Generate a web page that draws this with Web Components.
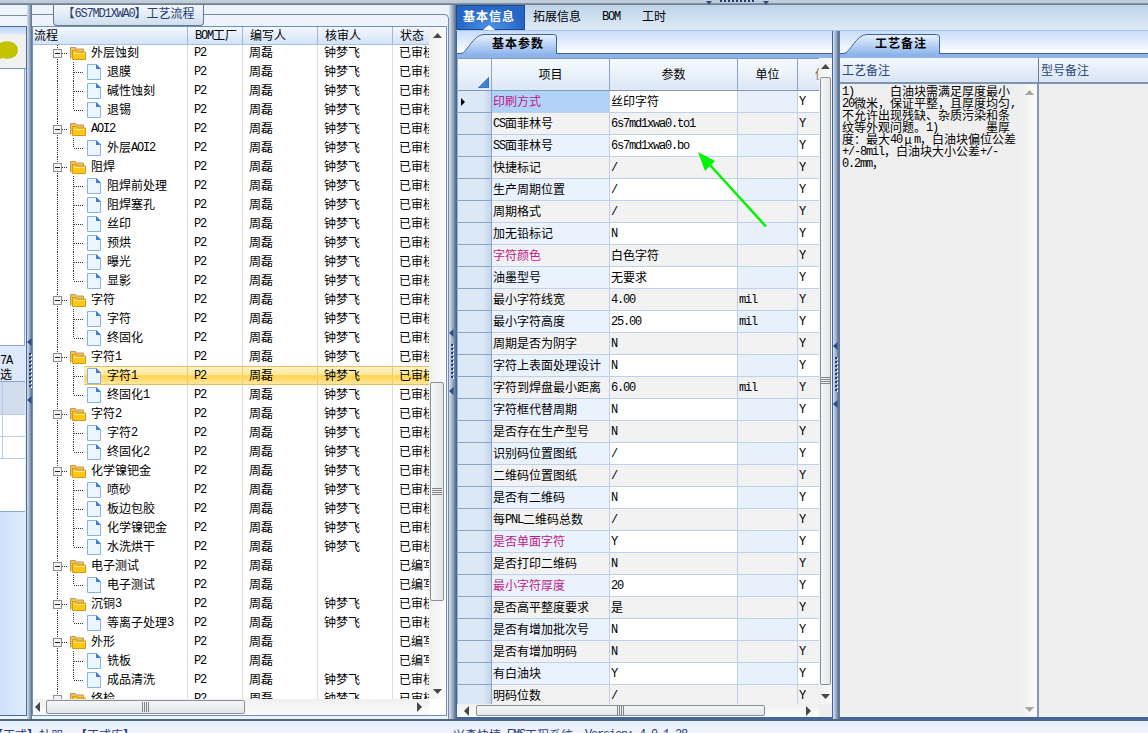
<!DOCTYPE html>
<html lang="zh-CN">
<head>
<meta charset="utf-8">
<title>工艺流程</title>
<style>
    html, body { margin: 0; height: 733px; overflow: hidden; }
    body {
        width: 1148px;
        font-family: "Noto Sans CJK SC", sans-serif;
        font-size: 12px;
        line-height: 18px;
        color: #000;
        background: #e9f1fb;
    }
</style>
</head>
<body>
<app-shell>
    <side-strip slot="main"></side-strip>
    <split-bar slot="main" style="width:5px;--grip:333px"></split-bar>
    <process-tree slot="main"></process-tree>
    <split-bar slot="main" style="width:7px;--grip:324px"></split-bar>
    <detail-area slot="main">
        <param-grid slot="left"></param-grid>
        <split-bar slot="mid" style="width:6px;--grip:311px"></split-bar>
        <notes-panel slot="right"></notes-panel>
    </detail-area>
</app-shell>
<script>
const base = `
    *, :host { box-sizing: border-box; }
    i.l { font: 12px/0 "Liberation Mono", monospace; letter-spacing: -1.2px; font-style: normal; white-space: pre; vertical-align: 1px; }
    b i.l { font-weight: bold; }
`;

// half-width characters take exactly 6px, like in a bitmap font
function mix(text) {
    return text.replace(/[\x20-\x7e]+/g, m => `<i class="l">${m}</i>`);
}

class AppShell extends HTMLElement {
    connectedCallback() {
        this.attachShadow({ mode: 'open' });
        this.shadowRoot.innerHTML = `
            <style>
                ${base}
                :host { display: flex; flex-direction: column; width: 1148px; height: 733px; overflow: hidden; }
                .top {
                    height: 5px; flex: none; display: flex; justify-content: center;
                    background: linear-gradient(#c3d0de, #bccad8 55%, #8493a4 70%, #5f7082 85%, #8fa0b2);
                }
                .top svg { display: block; margin-left: 326px; }
                .main { display: flex; height: 714px; flex: none; }
                .status {
                    height: 14px; flex: none; overflow: hidden; display: flex;
                    border-top: 2px solid #53657f;
                    background: linear-gradient(#e4eefb, #f0f5fc);
                    color: #2c4078;
                }
                .status span { white-space: pre; padding-top: 5px; }
                .status i.l { vertical-align: 2px; }
                .status .a { width: 453px; text-indent: -9px; flex: none; }
            </style>
            <div class="top">
                <svg width="64" height="5"><path d="M1 1h6l-3 4zM58 1h6l-3 4z" fill="#34507c"/><path d="M15 1h35" stroke="#243a78" stroke-width="2" stroke-dasharray="2 2"/></svg>
            </div>
            <div class="main"><slot name="main"></slot></div>
            <div class="status">
                <span class="a">${mix('【正式】杜朋  【正式库】')}</span>
                <span>${mix('兴森快捷 EMS工程系统  Version: 4.0.1.28')}</span>
            </div>
        `;
    }
}

class SplitBar extends HTMLElement {
    connectedCallback() {
        this.attachShadow({ mode: 'open' });
        this.shadowRoot.innerHTML = `
            <style>
                :host {
                    display: block; flex: none; padding-top: var(--grip); overflow: hidden;
                    background: linear-gradient(90deg, #d6e2f0, #a9bacd 40%, #7387a0 80%, #52698c);
                    box-sizing: border-box;
                }
                svg { display: block; }
            </style>
            <svg width="6" height="66"><path d="M4.500 16v36" stroke="#fff" stroke-dasharray="2 2"/><path d="M4.500 0v8L0 4zM4.500 58v8L0 62z" fill="#2f4a85"/><path d="M3 15v36" stroke="#243a78" stroke-width="2" stroke-dasharray="2 2"/></svg>
        `;
    }
}

class ScrollBar extends HTMLElement {
    connectedCallback() {
        const v = this.hasAttribute('vertical');
        const faded = this.hasAttribute('faded');
        const before = this.getAttribute('before') || 0;
        const size = this.getAttribute('size') || 0;
        const fill = faded ? '#a5a5a5' : '#474747';
        this.attachShadow({ mode: 'open' });
        this.shadowRoot.innerHTML = `
            <style>
                *, :host { box-sizing: border-box; }
                :host {
                    display: flex; flex: none; align-items: center;
                    flex-direction: ${v ? 'column' : 'row'};
                    background: linear-gradient(${v ? '90deg' : '180deg'}, #f0f0f0, #fbfbfb);
                }
                svg { flex: none; display: block; }
                .gap { flex: none; ${v ? 'height' : 'width'}: ${before}px; }
                .thumb {
                    flex: none; display: flex; align-items: center; justify-content: center;
                    ${v ? `width: calc(100% - 2px); height: ${size}px` : `height: calc(100% - 2px); width: ${size}px`};
                    border: 1px solid #8b8f96; border-radius: 2px;
                    background: linear-gradient(${v ? '90deg' : '180deg'}, #f5f6f7, #e3e6ea);
                }
                .rest { flex: 1; }
            </style>
            ${v ? `<svg width="9" height="16"><path d="M0 11h9L4.500 6z" fill="${fill}"/></svg>`
                : `<svg width="13" height="10"><path d="M7 0v10L2 5z" fill="${fill}"/></svg>`}
            <div class="gap"></div>
            ${size ? `<div class="thumb">${v
                ? '<svg width="10" height="8"><path d="M0 .5h10M0 2.500h10M0 4.500h10M0 6.500h10" stroke="#858585"/></svg>'
                : '<svg width="8" height="10"><path d="M.5 0v10M2.500 0v10M4.500 0v10M6.500 0v10" stroke="#858585"/></svg>'}</div>` : ''}
            <div class="rest"></div>
            ${v ? `<svg width="9" height="16"><path d="M0 6h9l-4.500 5z" fill="${fill}"/></svg>`
                : `<svg width="13" height="10"><path d="M4 0v10l5-5z" fill="${fill}"/></svg>`}
        `;
    }
}

class SideStrip extends HTMLElement {
    connectedCallback() {
        this.attachShadow({ mode: 'open' });
        this.shadowRoot.innerHTML = `
            <style>
                ${base}
                :host { display: flex; flex-direction: column; width: 27px; flex: none; background: #eef4fc; }
                .cap { height: 21px; flex: none; }
                .cap::after { content: ""; display: block; height: 10px; border-bottom: 1px solid #7b8ba0; }
                .box { width: 27px; height: 690px; border: solid #4a6aa5; border-width: 1px 1px 1px 0; background: linear-gradient(90deg, #cfe1fb, #e1edfd); }
                .bar { height: 7px; background: linear-gradient(#bfd5f6, #d9e8fd); }
                .tool { height: 35px; background: #f1f1f1; border-bottom: 1px solid #7b93bb; padding-top: 7px; }
                .tool svg { display: block; }
                .white { height: 277px; width: 25px; background: #fff; border-right: 1px solid #8ba6cf; border-bottom: 1px solid #8ba6cf; }
                .head { height: 36px; line-height: 14px; padding-top: 7px; background: #dde9fb; width: 25px; white-space: nowrap; border-bottom: 1px solid #8ba6cf; }
                .grid { width: 25px; height: 130px; background: #fff; display: grid; grid-template-columns: 2px 1fr; grid-template-rows: 33px 22px 22px 1fr; border-bottom: 1px solid #8ba6cf; }
                .grid span { border: solid #b6cbed; border-width: 0 0 1px 1px; }
                .grid span:nth-child(-n+2) { background: #d1dcec; }
                .grid span:nth-child(odd) { border-left: 0; }
                .grid span:nth-child(n+7) { border: 0; }
            </style>
            <div class="cap"></div>
            <div class="box">
                <div class="bar"></div>
                <div class="tool"><svg width="20" height="22"><path d="M0 2C7-2 18 1 18 9S8 19 2 17L0 18z" fill="#c3c300"/></svg></div>
                <div class="white"></div>
                <div class="head">${mix('7A')}<br>选</div>
                <div class="grid">${'<span></span>'.repeat(8)}</div>
            </div>
        `;
    }
}

// name, is folder
const steps = [
    ['外层蚀刻', 1], ['退膜'], ['碱性蚀刻'], ['退锡'],
    ['AOI2', 1], ['外层AOI2'],
    ['阻焊', 1], ['阻焊前处理'], ['阻焊塞孔'], ['丝印'], ['预烘'], ['曝光'], ['显影'],
    ['字符', 1], ['字符'], ['终固化'],
    ['字符1', 1], ['字符1'], ['终固化1'],
    ['字符2', 1], ['字符2'], ['终固化2'],
    ['化学镍钯金', 1], ['喷砂'], ['板边包胶'], ['化学镍钯金'], ['水洗烘干'],
    ['电子测试', 1], ['电子测试'],
    ['沉铜3', 1], ['等离子处理3'],
    ['外形', 1], ['铣板'], ['成品清洗'],
    ['终检', 1]
];
const selectedStep = 17;
const editedOnly = [27, 28, 31, 32];

function stepIcon(folder, last) {
    const dots = 'stroke="#333" stroke-dasharray="1 1" fill="none"';
    if (folder) {
        return `<svg width="58" height="19">
            <path d="M24.500 0v19M29 10.500h6" ${dots}/>
            <rect x="20.500" y="6.500" width="8" height="8" fill="#f4f4f4" stroke="#8d8d8d"/><path d="M22 10.500h5" stroke="#222"/>
            <path d="M37.500 15.500v-11h5l1 1.500h7v3" fill="#e6c06a" stroke="#c79a45"/>
            <path d="M39.500 16.500v-9h4l1 1.500h8v7.500z" fill="#ffc814" stroke="#d9971a"/>
            <path d="M40.500 10.500h11.500" stroke="#ffe994"/>
        </svg>`;
    }
    return `<svg width="74" height="19">
        <path d="M24.500 0v19M40.500 0v${last ? 10 : 19}M41 10.500h9" ${dots}/>
        <path d="M54.500 2.500h9l4 4v11h-13z" fill="#eaf5ff" stroke="#86b3e6"/>
        <path d="M63 2v5h5z" fill="#3f80d4"/>
    </svg>`;
}

class ProcessTree extends HTMLElement {
    connectedCallback() {
        this.attachShadow({ mode: 'open' });
        const rows = steps.map(([name, folder], i) => {
            const edited = editedOnly.includes(i);
            const last = !steps[i + 1] || steps[i + 1][1];
            return `<div class="row ${i === selectedStep ? 'sel' : ''}">
                <span class="name">${stepIcon(folder, last)}<div>${mix(name)}</div></span>
                <span>${mix('P2')}</span><span>周磊</span>
                <span>${edited ? '' : '钟梦飞'}</span>
                <span>${edited ? '已编写' : '已审核'}</span>
            </div>`;
        }).join('');
        this.shadowRoot.innerHTML = `
            <style>
                ${base}
                :host { display: flex; flex-direction: column; width: 417px; flex: none; background: #edf3fb; }
                .cap { height: 21px; flex: none; display: flex; }
                .line { height: 10px; border-bottom: 1px solid #7b8ba0; }
                .line.end { flex: 1; height: 12px; margin-top: 9px; border: solid #7b8ba0; border-width: 1px 1px 0 0; border-radius: 0 5px 0 0; }
                .title { width: 151px; height: 21px; border: 1px solid #66788e; border-top: 0; border-radius: 0 0 4px 4px; background: linear-gradient(#f4f8fd, #cfdeee); color: #29406e; text-align: center; line-height: 15px; white-space: nowrap; }
                .frame { flex: 1; border-right: 1px solid #7b8ba0; padding-right: 1px; padding-bottom: 3px; min-height: 0; }
                .grid { height: 690px; border: 1px solid #6f8fbe; background: #fff; display: flex; }
                .left { width: 396px; flex: none; display: flex; flex-direction: column; }
                .head, .row { display: grid; grid-template-columns: 155px 55px 75px 75px 36px; flex: none; }
                .head { height: 18px; background: linear-gradient(#f3f8ff, #d3e3f7); border-bottom: 1px solid #a9c0dc; line-height: 15px; }
                .head span { border-right: 1px solid #9fb6d4; padding-left: 7px; overflow: hidden; white-space: nowrap; }
                .head span:first-child { padding-left: 1px; }
                .head span:last-child { border: 0; }
                .body { height: 654px; overflow: hidden; }
                .row { height: 19px; line-height: 18px; }
                .row:first-child { margin-top: -2px; }
                .row span { border-right: 1px solid #dcdcdc; padding-left: 6px; overflow: hidden; white-space: nowrap; height: 19px; }
                .row span.name { padding: 0; display: flex; }
                .row span:last-child { border: 0; }
                .row.sel { background: linear-gradient(#e2c068 1px, #fff3c4 1px, #fde79b 45%, #ffd34c 52%, #ffe79a 94%, #e2c068 95%) 51px 0 no-repeat; }
                .row.sel span { border-color: #e8ce7c; }
                svg { flex: none; display: block; }
                .wrap { display: flex; flex-direction: column; }
                .top { display: flex; height: 672px; }
                .top scroll-bar { width: 16px; height: 672px; }
                .hbar { height: 16px; width: 412px; display: flex; }
                .hbar scroll-bar { width: 396px; height: 16px; padding-right: 3px; }
            </style>
            <div class="cap">
                <div class="line" style="width:21px"></div>
                <div class="title">${mix('【6S7MD1XWA0】工艺流程')}</div>
                <div class="line end"></div>
            </div>
            <div class="frame"><div class="grid"><div class="wrap">
                <div class="top">
                    <div class="left">
                        <div class="head"><span>流程</span><span>${mix('BOM')}工厂</span><span>编写人</span><span>核审人</span><span>状态</span></div>
                        <div class="body">${rows}</div>
                    </div>
                    <scroll-bar vertical before="339" size="219"></scroll-bar>
                </div>
                <div class="hbar"><scroll-bar before="0" size="199"></scroll-bar></div>
            </div></div></div>
        `;
    }
}

class DetailArea extends HTMLElement {
    connectedCallback() {
        this.attachShadow({ mode: 'open' });
        this.shadowRoot.innerHTML = `
            <style>
                ${base}
                :host { display: flex; flex-direction: column; width: 692px; flex: none; }
                nav { height: 26px; flex: none; display: flex; line-height: 22px; background: linear-gradient(#bed4ea, #dfeaf6); border-bottom: 1px solid #a9c4df; }
                nav span { white-space: nowrap; }
                .on {
                    width: 69px; height: 25px; display: flex; flex-direction: column; align-items: center;
                    background: radial-gradient(ellipse at 50% 100%, #4e95e8, #2765c5 70%); border: 1px solid #1d4a96;
                    color: #fff; font-weight: bold; letter-spacing: 1px; line-height: 20px; margin-right: 8px; padding-right: 3px;
                }
                .on svg { display: block; flex: none; margin-top: -1px; }
                .cols { display: flex; height: 688px; }
            </style>
            <nav>
                <span class="on">基本信息<svg width="12" height="5"><path d="M0 5l6-5 6 5z" fill="#fff"/></svg></span>
                <span style="width:69px">拓展信息</span>
                <span style="width:40px">${mix('BOM')}</span>
                <span>工时</span>
            </nav>
            <div class="cols"><slot name="left"></slot><slot name="mid"></slot><slot name="right"></slot></div>
        `;
    }
}

class PageTab extends HTMLElement {
    connectedCallback() {
        this.attachShadow({ mode: 'open' });
        this.shadowRoot.innerHTML = `
            <style>
                :host { display: block; height: 27px; flex: none; background: linear-gradient(#c8dcfb, #fdfeff 22px, #3e63a0 22px, #3e63a0 23px, #8db3ea 23px); }
                .tab { display: grid; width: 100px; height: 23px; }
                .tab > * { grid-area: 1 / 1; }
                b { letter-spacing: 1px; padding: 3px 0 0 35px; white-space: nowrap; line-height: 18px; }
                svg { display: block; }
            </style>
            <div class="tab">
                <svg width="100" height="23">
                    <defs><linearGradient id="g" x2="0" y2="1"><stop stop-color="#e9f2fe"/><stop offset="1" stop-color="#8fb5eb"/></linearGradient></defs>
                    <path d="M0 23.500V22.500H4C10 22 16 3.500 27 3.500H96.500Q99.500 3.500 99.500 6V23.500z" fill="url(#g)"/>
                    <path d="M0 22.500H4C10 22 16 3.500 27 3.500H96.500Q99.500 3.500 99.500 6V23" fill="none" stroke="#3e63a0"/>
                </svg>
                <b><slot></slot></b>
            </div>
        `;
    }
}

const params = [
    ['印刷方式', '丝印字符', '', 1], ['CS面菲林号', '6s7md1xwa0.to1'], ['SS面菲林号', '6s7md1xwa0.bo'],
    ['快捷标记', '/'], ['生产周期位置', '/'], ['周期格式', '/'], ['加无铅标记', 'N'],
    ['字符颜色', '白色字符', '', 1], ['油墨型号', '无要求'], ['最小字符线宽', '4.00', 'mil'],
    ['最小字符高度', '25.00', 'mil'], ['周期是否为阴字', 'N'], ['字符上表面处理设计', 'N'],
    ['字符到焊盘最小距离', '6.00', 'mil'], ['字符框代替周期', 'N'], ['是否存在生产型号', 'N'],
    ['识别码位置图纸', '/'], ['二维码位置图纸', '/'], ['是否有二维码', 'N'], ['每PNL二维码总数', '/'],
    ['是否单面字符', 'Y', '', 1], ['是否打印二维码', 'N'], ['最小字符厚度', '20', '', 1],
    ['是否高平整度要求', '是'], ['是否有增加批次号', 'N'], ['是否有增加明码', 'N'],
    ['有白油块', 'Y'], ['明码位数', '/']
];

class ParamGrid extends HTMLElement {
    connectedCallback() {
        this.attachShadow({ mode: 'open' });
        const rows = params.map(([name, value, unit, key], i) => `
            <div class="row ${key ? 'key' : ''}">
                <span>${i ? '' : '<svg width="5" height="8"><path d="M0 0v8l4-4z"/></svg>'}</span>
                <span>${mix(name)}</span><span>${mix(value)}</span><span>${mix(unit || '')}</span><span>${mix('Y')}</span>
            </div>`).join('');
        this.shadowRoot.innerHTML = `
            <style>
                ${base}
                :host { display: flex; flex-direction: column; width: 377px; flex: none; border: solid #3f66a4; border-width: 0 1px 2px 1px; background: #8db3ea; }
                .table { height: 646px; flex: none; display: flex; border-left: 1px solid #8db3ea; background: #f3f6fb; }
                .left { width: 361px; flex: none; }
                .head, .row { display: grid; grid-template-columns: 34px 118px 128px 60px 21px; }
                .head { height: 33px; border: solid #7f9bc4; border-width: 1px 0; background: linear-gradient(#f6fafe, #dde8f5); }
                .head span { border-right: 1px solid #8ba5c9; text-align: center; line-height: 30px; overflow: hidden; height: 31px; }
                .head span:first-child { display: flex; align-items: flex-end; justify-content: flex-end; padding: 0 2px 2px 0; }
                .head span:last-child { border: 0; color: #8a6a48; text-align: left; padding-left: 17px; white-space: nowrap; }
                .body { height: 613px; overflow: hidden; }
                .row { height: 22px; line-height: 20px; }
                .row span { border: solid #bfd0ee; border-width: 0 1px 1px 0; padding-left: 1px; white-space: nowrap; background: #fff; overflow: hidden; }
                .row span:nth-child(4) { background: #e8f1fb; }
                .row span:nth-child(2) { background: #eaf2fd; }
                .row:nth-child(even) span { background: #f2f2f2; }
                .row span:last-child { border-right: 0; }
                .row span:first-child, .row:nth-child(even) span:first-child {
                    background: linear-gradient(90deg, #dbe8f6 75%, #c5d6ea); border-color: #8aa3c4; padding: 7px 0 0 3px;
                }
                .row:first-child span:nth-child(2) { background: #b0d2f7; }
                .key span:nth-child(2) { color: #c2188b; }
                svg { display: block; }
                .v { width: 13px; height: 646px; }
                .h { display: flex; flex: none; height: 13px; background: #eee; }
                .h scroll-bar { width: 362px; height: 13px; padding: 0 4px 0 5px; }
            </style>
            <page-tab>基本参数</page-tab>
            <div class="table">
                <div class="left">
                    <div class="head"><span><svg width="11" height="11"><path d="M11 0v11H0z" fill="#3f7fd6" stroke="#2b5da8" stroke-width=".5"/></svg></span><span>项目</span><span>参数</span><span>单位</span><span>值</span></div>
                    <div class="body">${rows}</div>
                </div>
                <scroll-bar class="v" vertical before="3" size="608"></scroll-bar>
            </div>
            <div class="h"><scroll-bar before="1" size="289"></scroll-bar></div>
        `;
    }
}

class NotesPanel extends HTMLElement {
    connectedCallback() {
        const lines = [
            '1)      白油块需满足厚度最小',
            '20微米，保证平整，且厚度均匀,',
            '不允许出现残缺、杂质污染和条',
            '纹等外观问题。1)        墨厚',
            '度：最大40μm，白油块偏位公差',
            '+/-8mil，白油块大小公差+/-',
            '0.2mm，'
        ];
        this.attachShadow({ mode: 'open' });
        this.shadowRoot.innerHTML = `
            <style>
                ${base}
                :host { display: flex; flex-direction: column; width: 309px; flex: none; border-left: 1px solid #5879aa; border-bottom: 2px solid #3f66a4; }
                .cols { display: grid; grid-template-columns: 199px 1fr; grid-template-rows: 26px 1fr; flex: 1; background: #efefef; }
                .head { background: linear-gradient(#f4f8fd, #d8e5f3); border-bottom: 2px solid #7d93b2; color: #2c4580; line-height: 24px; padding-left: 2px; }
                .head:first-child { border-right: 1px solid #6d7e94; }
                .memo { display: flex; justify-content: space-between; border-right: 2px solid #8499b8; }
                .text { width: 180px; padding: 1px 0 0 2px; line-height: 12px; }
                .text div { height: 12px; white-space: nowrap; }
                .mu { display: inline-block; width: 12px; text-align: center; }
                scroll-bar { width: 15px; }
            </style>
            <page-tab>工艺备注</page-tab>
            <div class="cols">
                <div class="head">工艺备注</div>
                <div class="head">型号备注</div>
                <div class="memo">
                    <div class="text">${lines.map(t => `<div>${mix(t).replace('μ', '<span class="mu">μ</span>')}</div>`).join('')}</div>
                    <scroll-bar vertical faded></scroll-bar>
                </div>
                <div></div>
            </div>
        `;
    }
}

// annotation arrow lying over the grid
class GreenArrow extends HTMLElement {
    connectedCallback() {
        this.attachShadow({ mode: 'open' });
        this.shadowRoot.innerHTML = `
            <style>:host { display: block; position: absolute; left: 696px; top: 150px; } svg { display: block; }</style>
            <svg width="74" height="80"><path d="M70 76.500L14 15" stroke="#00f500" stroke-width="2.500"/><path d="M2 2l17 9-10 10z" fill="#00f500"/></svg>
        `;
    }
}

customElements.define('app-shell', AppShell);
customElements.define('split-bar', SplitBar);
customElements.define('scroll-bar', ScrollBar);
customElements.define('side-strip', SideStrip);
customElements.define('process-tree', ProcessTree);
customElements.define('detail-area', DetailArea);
customElements.define('page-tab', PageTab);
customElements.define('param-grid', ParamGrid);
customElements.define('notes-panel', NotesPanel);
customElements.define('green-arrow', GreenArrow);
document.body.append(document.createElement('green-arrow'));
</script>
</body>
</html>
